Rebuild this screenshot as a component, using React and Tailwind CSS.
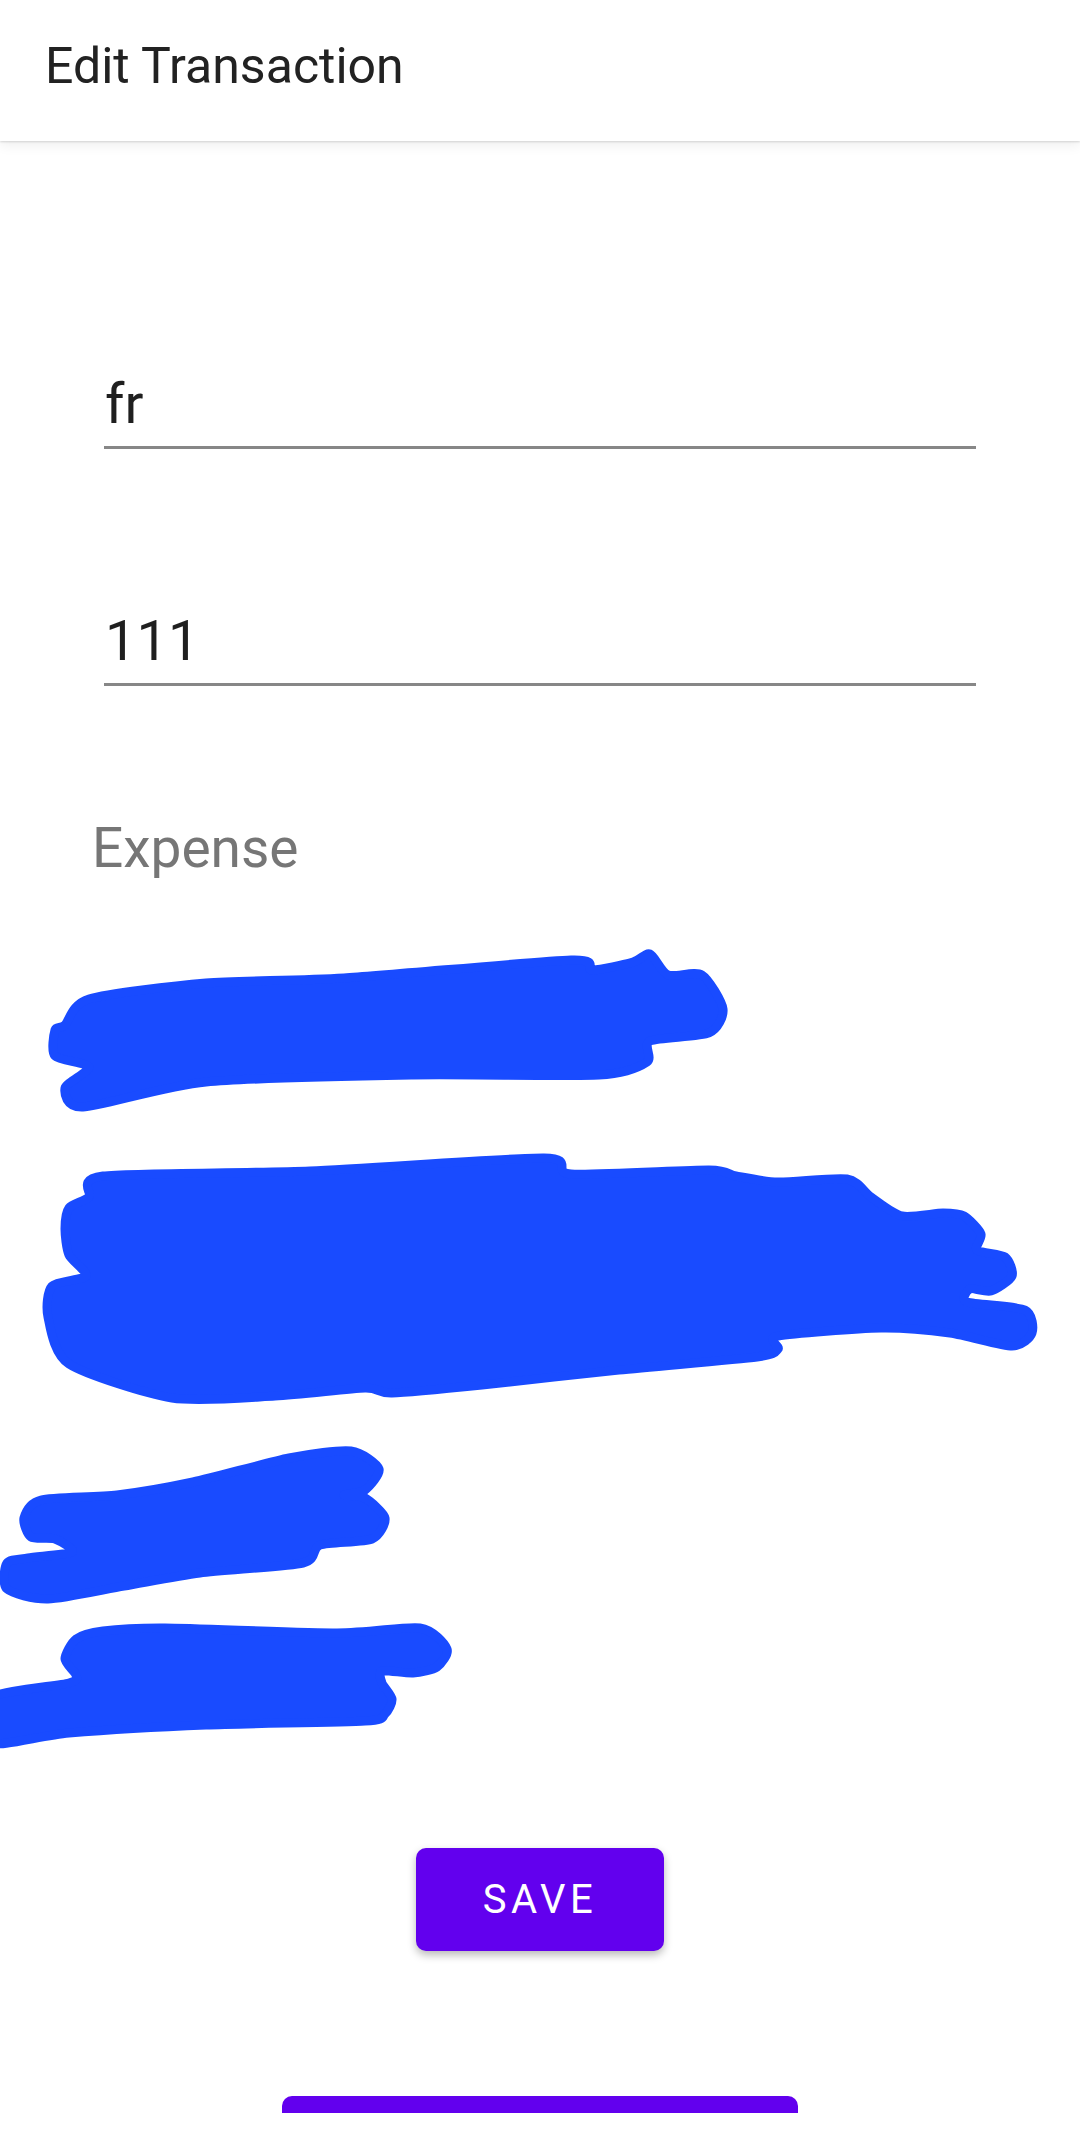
const SCRIBBLES = [
  [
    [65, 1024], [89, 998], [206, 982], [344, 977], [571, 959], [592, 969],
    [633, 961], [650, 953], [668, 974], [702, 974], [723, 1008], [709, 1032],
    [650, 1040], [647, 1061], [599, 1074], [413, 1074], [206, 1081], [83, 1106],
    [65, 1087], [89, 1066], [55, 1055], [55, 1029],
  ],
  [
    [89, 1196], [103, 1175], [310, 1170], [544, 1157], [571, 1173], [709, 1169],
    [736, 1175], [778, 1181], [847, 1178], [871, 1196], [902, 1215], [943, 1212],
    [964, 1215], [981, 1233], [977, 1249], [1005, 1256], [1012, 1275], [991, 1290],
    [970, 1288], [967, 1301], [1025, 1309], [1032, 1332], [1012, 1345], [950, 1332],
    [881, 1327], [778, 1335], [778, 1348], [757, 1356], [619, 1369], [482, 1384],
    [392, 1392], [365, 1387], [275, 1395], [172, 1397], [69, 1363], [48, 1316],
    [52, 1285], [86, 1275], [69, 1254], [65, 1228], [69, 1207],
  ],
  [
    [24, 1517], [41, 1499], [117, 1494], [193, 1481], [289, 1457], [351, 1450],
    [379, 1468], [365, 1489], [344, 1494], [365, 1497], [385, 1517], [372, 1538],
    [320, 1544], [303, 1562], [200, 1572], [124, 1585], [48, 1598], [7, 1588],
    [7, 1562], [28, 1557], [72, 1551], [55, 1538], [31, 1536],
  ],
  [
    [-10, 1697], [69, 1682], [76, 1674], [65, 1658], [76, 1638], [103, 1630],
    [165, 1627], [337, 1632], [420, 1627], [447, 1648], [437, 1666], [413, 1672],
    [382, 1670], [382, 1682], [392, 1698], [385, 1713], [365, 1720], [206, 1724],
    [69, 1732], [-10, 1742],
  ],
];

// closed catmull-rom -> bezier so the marker strokes look round
function smoothPath(pts) {
  const n = pts.length;
  let d = `M${pts[0][0]},${pts[0][1]}`;
  for (let i = 0; i < n; i++) {
    const p0 = pts[(i - 1 + n) % n];
    const p1 = pts[i];
    const p2 = pts[(i + 1) % n];
    const p3 = pts[(i + 2) % n];
    const c1x = p1[0] + (p2[0] - p0[0]) / 8;
    const c1y = p1[1] + (p2[1] - p0[1]) / 8;
    const c2x = p2[0] - (p3[0] - p1[0]) / 8;
    const c2y = p2[1] - (p3[1] - p1[1]) / 8;
    d += ` C${c1x.toFixed(1)},${c1y.toFixed(1)} ${c2x.toFixed(1)},${c2y.toFixed(1)} ${p2[0]},${p2[1]}`;
  }
  return d + " Z";
}

function Field({ value, className }) {
  return (
    <div className={className}>
      <div className="pl-[1px] text-[56px] leading-none text-[#1f1f1f]">{value}</div>
      <div className="mt-[14px] h-[3px] bg-[#878787]" />
    </div>
  );
}

export default function App() {
  return (
    <div className="w-[1080px] h-[2153px] overflow-hidden bg-white font-['Roboto',sans-serif]">
      {/* app bar */}
      <header className="relative z-10 h-[141px] bg-white pl-[45px] pt-[41px] shadow-[0_1px_2px_rgba(0,0,0,0.14),0_4px_12px_rgba(0,0,0,0.07)]">
        <h1 className="text-[50px] leading-none text-[#222222]">Edit Transaction</h1>
      </header>

      <main className="flex flex-col">
        <Field value="fr" className="mx-[104px] mt-[235px]" />
        <Field value="111" className="mx-[104px] mt-[164px]" />

        <div className="mt-[135px] pl-[92px] text-[55px] leading-none text-[#767676]">Expense</div>

        {/* redaction scribbles */}
        <svg className="mt-[65px] block" width="1080" height="810" viewBox="0 940 1080 810">
          {SCRIBBLES.map((pts, i) => (
            <path
              key={i}
              d={smoothPath(pts)}
              fill="#194bff"
              stroke="#194bff"
              strokeWidth="9"
              strokeLinejoin="round"
            />
          ))}
        </svg>

        <div className="mt-[97px] flex justify-center">
          <button className="h-[103px] w-[248px] rounded-[10px] bg-[#6200ee] text-[40px] tracking-[4.5px] text-white shadow-[0_4px_9px_rgba(0,0,0,0.28)]">
            SAVE
          </button>
        </div>

        <div className="mt-[145px] flex justify-center">
          <div className="h-[17px] w-[516px] rounded-t-[10px] bg-[#6200ee]" />
        </div>
      </main>
    </div>
  );
}
